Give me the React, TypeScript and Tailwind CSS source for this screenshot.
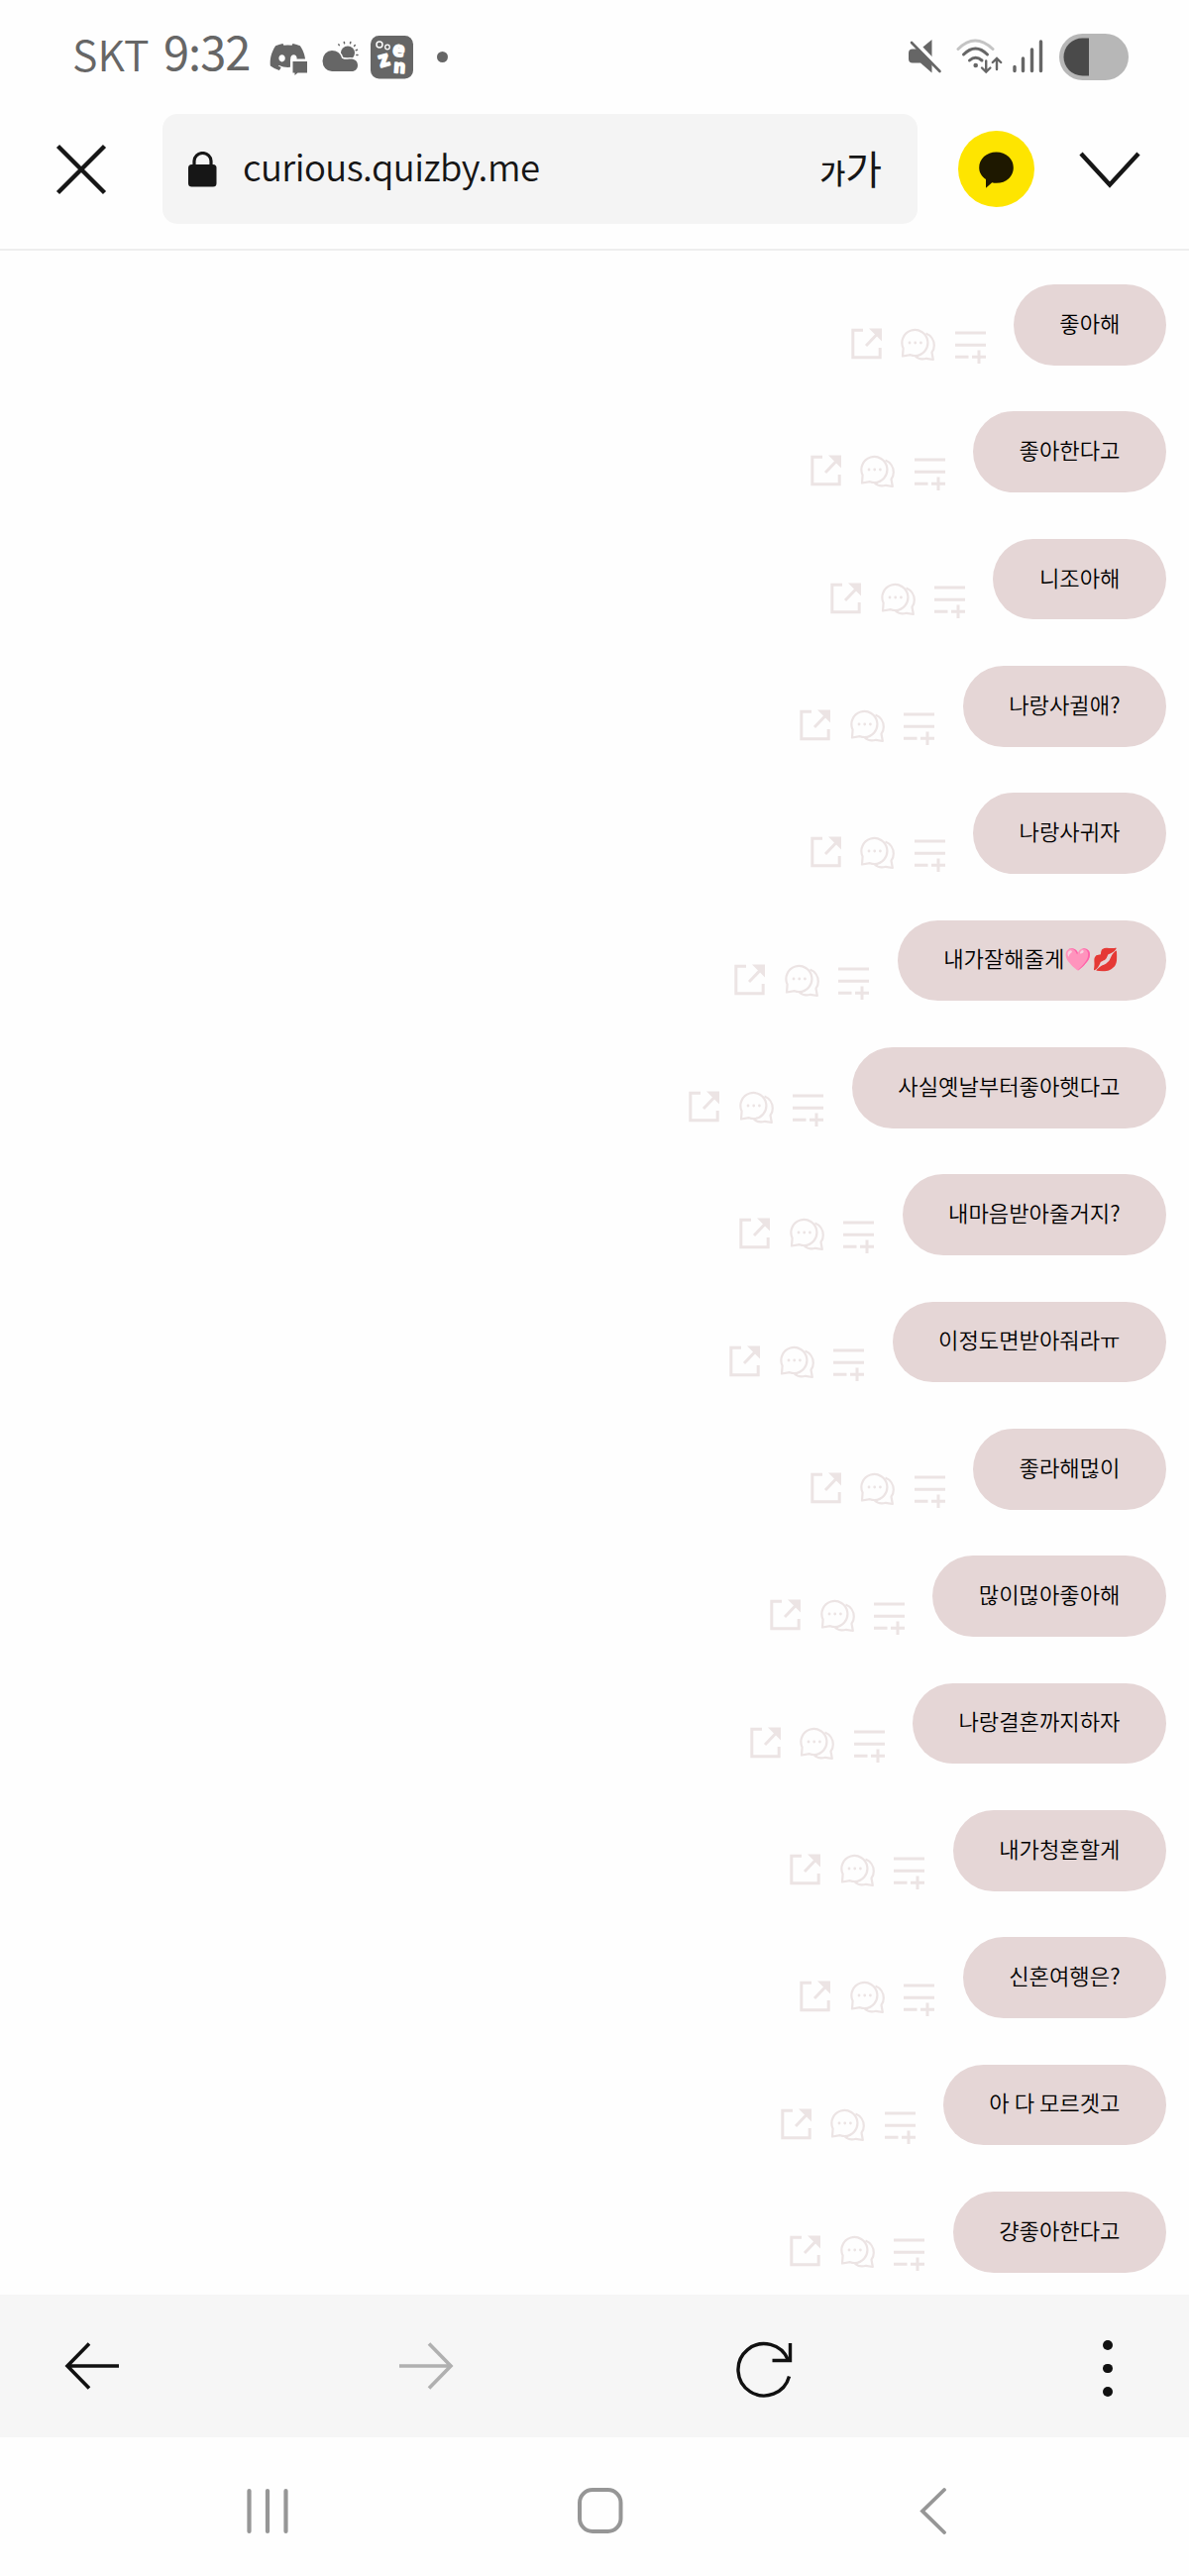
import { FaDiscord } from 'react-icons/fa6';

// ---------------------------------------------------------------------------
// Data
// ---------------------------------------------------------------------------
const MESSAGES: string[] = [
  '좋아해',
  '좋아한다고',
  '니조아해',
  '나랑사귈애?',
  '나랑사귀자',
  '내가잘해줄게🩷💋',
  '사실옛날부터좋아햇다고',
  '내마음받아줄거지?',
  '이정도면받아줘라ㅠ',
  '좋라해먾이',
  '많이먾아좋아해',
  '나랑결혼까지하자',
  '내가청혼할게',
  '신혼여행은?',
  '아 다 모르겟고',
  '걍좋아한다고',
];

// ---------------------------------------------------------------------------
// Status bar
// ---------------------------------------------------------------------------
function DiscordStatusIcon() {
  return (
    <div className="relative h-[34px] w-[38px]">
      <FaDiscord className="absolute -left-[1px] -top-[1px] h-[31px] w-[39px]" />
      <svg className="absolute left-0 top-0" width="40" height="34" viewBox="0 0 40 34">
        <path
          d="M23.500 19h14.500v11.500h-9.500l-3 2.500v-2.500h-2z"
          fill="currentColor"
          stroke="#fefefe"
          strokeWidth="5"
          paintOrder="stroke"
        />
      </svg>
    </div>
  );
}

function WeatherIcon() {
  return (
    <svg width="38" height="32" viewBox="0 0 38 32" fill="currentColor">
      <circle cx="26" cy="12.500" r="7" />
      <g stroke="currentColor" strokeWidth="1.500" strokeLinecap="round">
        <path d="M16.800 3.800l.5.800M22.300 1.500l.3 1.200M28.800 1.500l-.3 1.200M33.300 4.500l-.8 1M35.500 9.300l-1.200.4M36 14.500l-1.200-.1" />
      </g>
      <path
        d="M10 31a9.500 10.500 0 0 1 0-21c5 0 9 3 10 7.800 1.500 1 3.500 1 6 1 4.500-.6 9.500 0 10 5.700.2 4-2.500 6.500-6 6.500z"
        stroke="#fefefe"
        strokeWidth="3"
        paintOrder="stroke"
      />
    </svg>
  );
}

function EznIcon() {
  return (
    <svg className="overflow-visible" width="43" height="43.500" viewBox="0 0 43 43.5">
      <rect width="43" height="43.500" rx="8.500" fill="#666" />
      <circle cx="9" cy="9" r="3" fill="none" stroke="#fefefe" strokeWidth="1.500" />
      <circle cx="17" cy="11.500" r="2.300" fill="none" stroke="#fefefe" strokeWidth="1.300" />
      <g
        fill="#fefefe"
        stroke="#fefefe"
        strokeWidth="1.900"
        strokeLinejoin="round"
        fontFamily="'Open Sans', sans-serif"
        fontWeight="700"
      >
        <text x="22.500" y="20.500" fontSize="20" transform="rotate(8 28 14)">e</text>
        <text x="8.500" y="31" fontSize="21" transform="rotate(-16 13 25)">z</text>
        <text x="23.500" y="37.500" fontSize="18" transform="rotate(4 30 31)">n</text>
      </g>
    </svg>
  );
}

function MuteIcon() {
  return (
    <svg width="34" height="34" viewBox="0 0 34 34">
      <path d="M23.500 0v33.500l-11.500-10h-8q-4 0-4-4v-6q0-4 4-4h8z" fill="#666" />
      <path d="M5 .5L34 31" stroke="#fefefe" strokeWidth="4" />
      <path d="M3 3l28.500 29" stroke="#666" strokeWidth="2.600" strokeLinecap="round" />
    </svg>
  );
}

function WifiIcon() {
  return (
    <svg width="47" height="36" viewBox="0 0 47 36" fill="none" strokeLinecap="round" stroke="#666">
      <path d="M2 10.500q17-17 35 0" stroke="#c4c4c4" strokeWidth="3" />
      <path d="M7.500 16q12-12 24 0" strokeWidth="3" />
      <path d="M13.500 22q6-5.500 12.500 0" strokeWidth="3" />
      <circle cx="19.700" cy="27" r="2.300" fill="#666" stroke="none" />
      <path d="M30.200 22.500v10.500M26 29.500l4.200 4 4.200-4M41 31v-10.500M36.800 24l4.200-4 4.200 4" strokeWidth="2.400" />
    </svg>
  );
}

function SignalIcon() {
  return (
    <svg width="31" height="34" viewBox="0 0 31 34" stroke="#666" strokeWidth="3.400" strokeLinecap="round">
      <path d="M2 27.500v4M10.500 19v12.500M19.500 10v21.500M28.500 2v29.500" />
    </svg>
  );
}

function BatteryIcon() {
  return (
    <svg width="70" height="47" viewBox="0 0 70 47">
      <rect width="70" height="47" rx="23.500" fill="#b7b7b7" />
      <path d="M30 4.500v38h-6.500a19 19 0 0 1 0-38z" fill="#4a4a4a" />
    </svg>
  );
}

function StatusBar() {
  return (
    <div className="flex h-[115px] items-start pl-[73px] pr-[61px] text-[#666]">
      <span className="mt-[23px] w-[92px] whitespace-nowrap text-[43px] leading-[60px] font-[350]">
        SKT
      </span>
      <span className="mt-[21px] w-[107px] whitespace-nowrap text-[47px] leading-[60px] tracking-[-1px]">
        9:32
      </span>
      <div className="mt-[43px]">
        <DiscordStatusIcon />
      </div>
      <div className="ml-[14.500px] mt-[41px]">
        <WeatherIcon />
      </div>
      <div className="ml-[11px] mt-[36px]">
        <EznIcon />
      </div>
      <div className="ml-[24.500px] mt-[51.500px] size-[11px] rounded-full bg-[#666]" />
      <div className="flex-1" />
      <div className="mt-[39.500px]">
        <MuteIcon />
      </div>
      <div className="ml-[14px] mt-[39px]">
        <WifiIcon />
      </div>
      <div className="ml-[10px] mt-[40px]">
        <SignalIcon />
      </div>
      <div className="ml-[16px] mt-[34px]">
        <BatteryIcon />
      </div>
    </div>
  );
}

// ---------------------------------------------------------------------------
// Browser address bar
// ---------------------------------------------------------------------------
function AddressBar() {
  return (
    <header className="flex h-[138px] items-start border-b-2 border-[#eee] text-[#161616]">
      <button type="button" aria-label="닫기" className="ml-[56px] mt-[30px]">
        <svg width="52" height="52" viewBox="0 0 52 52" stroke="currentColor" strokeWidth="4.400">
          <path d="M2.500 2.500l47 47M49.500 2.500l-47 47" />
        </svg>
      </button>

      <div className="ml-[56px] flex h-[111px] w-[762px] items-center rounded-[15px] bg-[#f4f4f4] pl-[26px] pr-[36px]">
        <svg width="29" height="36" viewBox="0 0 29 36">
          <path d="M6 15V9.500a8.500 8 0 0 1 17 0V15" fill="none" stroke="currentColor" strokeWidth="3.200" />
          <rect y="13" width="28.500" height="22.500" rx="3.500" fill="currentColor" />
        </svg>
        <span className="ml-[26px] flex-1 whitespace-nowrap pb-[5px] text-[36.500px] leading-[56px] tracking-[-0.550px] font-[350]">
          curious.quizby.me
        </span>
        <span className="flex items-baseline pt-[2px] leading-[56px]">
          <span className="text-[28px] font-medium">가</span>
          <span className="text-[40px]">가</span>
        </span>
      </div>

      <div className="ml-[41px] mt-[17px] flex size-[77px] items-center justify-center rounded-full bg-[#fee500]">
        <svg width="35" height="42" viewBox="0 0 35 42" fill="#1e1800">
          <path d="M17.500 3.500c10 0 17.300 7 17.300 15.700s-7.300 15.600-17.300 15.600c-1.500 0-3-.1-4.300-.5L7 39.700V31C3 28.500.200 24.300.200 19.200.200 10.500 7.500 3.500 17.500 3.500z" />
        </svg>
      </div>

      <button type="button" aria-label="더보기" className="ml-[45px] mt-[38px]">
        <svg width="62" height="38" viewBox="0 0 62 38" fill="none" stroke="currentColor" strokeWidth="4.400">
          <path d="M2 2l29 31.500 29-31.500" />
        </svg>
      </button>
    </header>
  );
}

// ---------------------------------------------------------------------------
// Chat
// ---------------------------------------------------------------------------
function ShareIcon() {
  return (
    <svg width="31" height="32" viewBox="0 0 31 32" fill="none" stroke="currentColor" strokeWidth="3">
      <path d="M12 2.200H1.800v27.600h27.400V20" />
      <path d="M15 18L26 6.500" />
      <path d="M18 .600h13v13z" fill="currentColor" stroke="none" />
    </svg>
  );
}

function ChatIcon() {
  return (
    <svg width="35" height="34" viewBox="0 0 35 34" fill="none" stroke="currentColor" strokeWidth="2.200" strokeLinejoin="round">
      <path d="M2 28.500l.6-8A13 13 0 1 1 14.500 28q-2.500 0-4.500-.8z" />
      <path d="M25.500 5.500c5 2 8.300 6.800 8.300 12.200 0 2.700-.9 5-2.300 7l1.300 7.300-6.800-1.200c-4 1.200-8.500.5-11.500-2.500" />
      <g fill="currentColor" stroke="none">
        <circle cx="9" cy="15" r="1.400" />
        <circle cx="14.700" cy="15" r="1.400" />
        <circle cx="20.400" cy="15" r="1.400" />
      </g>
    </svg>
  );
}

function ListPlusIcon() {
  return (
    <svg width="31" height="34" viewBox="0 0 31 34" stroke="currentColor" strokeWidth="3">
      <path d="M0 3h31M0 15.200h31M0 27.200h13.500M17 27.200h14M24 20.500v13.500" />
    </svg>
  );
}

function MessageRow({ text }: { text: string }) {
  return (
    <div className="flex h-[81.700px] items-start justify-end">
      <div className="mr-[28.300px] mt-[44px] flex items-start text-[#ece4e4]">
        <ShareIcon />
        <div className="ml-[19.500px]">
          <ChatIcon />
        </div>
        <div className="ml-[19.500px] mt-[2px]">
          <ListPlusIcon />
        </div>
      </div>
      <div className="flex h-full items-center whitespace-nowrap rounded-full bg-[#e5d6d6] px-[46.500px] pb-[5px] text-[22.160px] leading-[33px] font-[350] text-black">
        {text}
      </div>
    </div>
  );
}

// ---------------------------------------------------------------------------
// Bottom bars
// ---------------------------------------------------------------------------
function BrowserToolbar() {
  return (
    <div className="flex h-[144px] items-start bg-[#f6f6f6] text-[#111]">
      <svg className="ml-[65px] mt-[47px]" width="56" height="50" viewBox="0 0 56 50" fill="none" stroke="currentColor" strokeWidth="3.600">
        <path d="M55 25H3M25 2.500L3 25l22 22.500" />
      </svg>
      <svg className="ml-[281px] mt-[47px] text-[#b0b0b0]" width="56" height="50" viewBox="0 0 56 50" fill="none" stroke="currentColor" strokeWidth="3.600">
        <path d="M1 25h52M31 2.500L53 25 31 47.500" />
      </svg>
      <svg className="ml-[284px] mt-[46px]" width="60" height="58" viewBox="0 0 60 58" fill="none" stroke="currentColor" strokeWidth="3.400">
        <path d="M54.500 36.500A26.200 26.200 0 1 1 53.500 20" />
        <path d="M55.500 3v17.500H37.500" />
      </svg>
      <div className="ml-[311px] mt-[46px] flex flex-col gap-[14px]">
        <i className="size-[9.500px] rounded-full bg-current" />
        <i className="size-[9.500px] rounded-full bg-current" />
        <i className="size-[9.500px] rounded-full bg-current" />
      </div>
    </div>
  );
}

function SystemNav() {
  return (
    <div className="flex flex-1 items-start pt-[50px] text-[#969696]">
      <svg className="ml-[248px]" width="44" height="48" viewBox="0 0 44 48" stroke="currentColor" strokeWidth="4.200" strokeLinecap="round">
        <path d="M3.500 4v41M22 4v41M40.500 4v41" />
      </svg>
      <svg className="ml-[290px]" width="48" height="48" viewBox="0 0 48 48" fill="none" stroke="currentColor" strokeWidth="4">
        <rect x="3" y="3" width="41.500" height="42" rx="13" />
      </svg>
      <svg className="ml-[297px]" width="30" height="48" viewBox="0 0 30 48" fill="none" stroke="currentColor" strokeWidth="3.800" strokeLinecap="round">
        <path d="M26 3L4 24.500 26 46" />
      </svg>
    </div>
  );
}

export default function App() {
  return (
    <div className="flex h-[2600px] w-[1200px] flex-col overflow-hidden bg-[#fefefe] font-['Noto_Sans_CJK_KR','Noto_Sans',sans-serif]">
      <StatusBar />
      <AddressBar />
      <main className="flex h-[2063px] flex-col gap-[46.650px] pr-[23px] pt-[34px]">
        {MESSAGES.map((text) => (
          <MessageRow key={text} text={text} />
        ))}
      </main>
      <BrowserToolbar />
      <SystemNav />
    </div>
  );
}
